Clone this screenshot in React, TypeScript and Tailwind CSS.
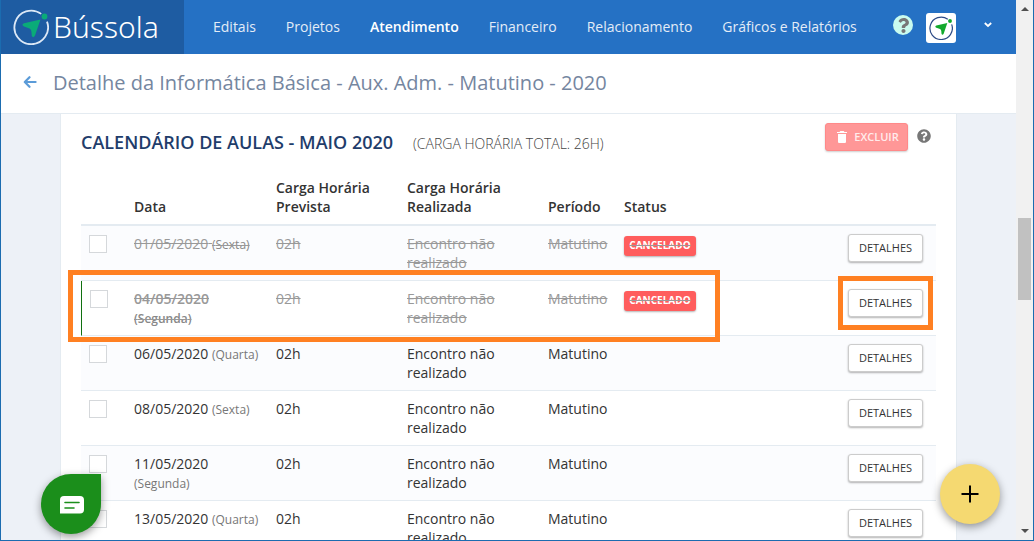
import React from 'react';
import { FaQuestion, FaQuestionCircle } from 'react-icons/fa';
import { IoMdTrash } from 'react-icons/io';

const NAV_ITEMS = [
    { label: 'Editais' },
    { label: 'Projetos' },
    { label: 'Atendimento', active: true },
    { label: 'Financeiro' },
    { label: 'Relacionamento' },
    { label: 'Gráficos e Relatórios' },
];

const LESSONS = [
    { date: '01/05/2020', day: 'Sexta', canceled: true },
    { date: '04/05/2020', day: 'Segunda', canceled: true, current: true },
    { date: '06/05/2020', day: 'Quarta' },
    { date: '08/05/2020', day: 'Sexta' },
    { date: '11/05/2020', day: 'Segunda' },
    { date: '13/05/2020', day: 'Quarta' },
];

const CompassMark = ({ className, ring, arrow }: { className: string; ring: string; arrow: string }) => (
    <svg viewBox="0 0 36 36" className={className} fill="none" aria-hidden="true">
        <path d="M28.2 4.9A16.8 16.8 0 1 0 34 12.6" stroke={ring} strokeWidth="1.8" />
        <circle cx="31.500" cy="7.500" r="2.9" fill={arrow} />
        <path d="M27.500 10.500 22 26.500Q20.300 29.500 18.800 27L18.400 22.500Q18.200 20.600 16.500 19.600L11 17.600Q8 15.700 11 14.200Z" fill={arrow} />
    </svg>
);

const Header = () => (
    <header className="flex h-[54px] shrink-0 bg-[#2571c4]">
        <a href="#" className="flex w-[183px] shrink-0 items-center gap-1 bg-[#1e5ca2] pl-3 text-white">
            <CompassMark className="size-9" ring="#dce8f6" arrow="#0aab78" />
            <span className="font-['Noto_Sans',sans-serif] text-[30px] leading-9 font-light">Bússola</span>
        </a>
        <nav className="flex flex-1 items-center gap-[30px] pl-[29px] text-sm text-[#e3ecf7]">
            {NAV_ITEMS.map((item) => (
                <a key={item.label} href="#" className={item.active ? 'font-semibold whitespace-nowrap text-white' : 'whitespace-nowrap'}>
                    {item.label}
                </a>
            ))}
        </nav>
        <div className="flex items-center pr-6">
            <button aria-label="Ajuda" className="mr-[13px] mb-1 flex size-5 items-center justify-center rounded-full bg-[#c9fbef] text-[#777]">
                <FaQuestion className="size-[15px]" />
            </button>
            <button aria-label="Perfil" className="mt-[2px] flex size-[30px] items-center justify-center rounded-[3px] bg-white">
                <CompassMark className="size-6" ring="#2c4a86" arrow="#12a92c" />
            </button>
            <button aria-label="Abrir menu" className="mb-1 ml-7 text-white">
                <svg viewBox="0 0 8 6" className="h-[6px] w-2" fill="none" stroke="currentColor" strokeWidth="1.8">
                    <path d="M.8 1 4 4 7.2 1" />
                </svg>
            </button>
        </div>
    </header>
);

const TitleBar = () => (
    <div className="flex h-[60px] shrink-0 items-center border-b border-[#e4ebf1] bg-white pl-[22px]">
        <a href="#" aria-label="Voltar" className="mr-4 mb-1 text-[#5b9bd8]">
            <svg viewBox="0 0 14 12" className="h-3 w-[14px]" fill="none" stroke="currentColor" strokeWidth="2.2" strokeLinecap="round" strokeLinejoin="round">
                <path d="M6.5 1.2 1.8 6l4.7 4.8M2.2 6h10.4" />
            </svg>
        </a>
        <h1 className="pb-[2px] text-xl text-[#75869f]">
            Detalhe da Informática Básica - Aux. Adm. - Matutino - 2020
        </h1>
    </div>
);

type Lesson = { date: string; day: string; canceled?: boolean; current?: boolean };

const LessonRow = ({ lesson }: { lesson: Lesson }) => {
    const text = lesson.canceled ? 'text-[#999] line-through' : 'text-[#333]';

    return (
        <tr className="relative align-top odd:bg-[#fbfcfe] [&>td]:border-b [&>td]:border-b-[#e4ebf1] [&>td]:p-2">
            <td className={lesson.current ? 'border-l border-l-[#107010]' : ''}>
                <input
                    type="checkbox"
                    aria-label={`Selecionar aula de ${lesson.date}`}
                    className="mt-px block size-[18px] appearance-none border border-[#d5d8db] bg-white"
                />
                {/* Marks the lesson being explained */}
                {lesson.current && (
                    <div className="pointer-events-none absolute -top-[11px] right-[216px] -bottom-[6px] -left-[13px] z-10 border-[5px] border-[#ff8022]" />
                )}
            </td>
            <td className={text}>
                <span className={lesson.current ? 'font-semibold' : ''}>
                    {lesson.date} <small className={lesson.canceled ? 'text-xs text-[#888]' : 'text-xs text-[#777]'}>({lesson.day})</small>
                </span>
            </td>
            <td className={text}>02h</td>
            <td className={text}>Encontro não realizado</td>
            <td className={text}>Matutino</td>
            <td>
                {lesson.canceled && (
                    <span className="mt-[2px] block h-5 w-[72px] rounded-[3px] bg-[#ff5d5d] text-center text-[10px] leading-[19px] font-bold text-white shadow-[0_1px_2px_rgba(0,0,0,0.3)]">
                        <s className="decoration-[#999]">CANCELADO</s>
                    </span>
                )}
            </td>
            <td>
                <div className="relative h-7 w-[75px]">
                    <button className="block h-7 w-full rounded-[3px] border border-[#ccc] bg-white pb-px text-[11px] text-[#333] shadow-[0_1px_2px_rgba(0,0,0,0.3)]">
                        DETALHES
                    </button>
                    {lesson.current && (
                        <div className="pointer-events-none absolute -top-[13px] -right-[10px] -bottom-[13px] -left-[10px] z-10 border-[5px] border-[#ff8022]" />
                    )}
                </div>
            </td>
        </tr>
    );
};

const Calendar = () => (
    <section className="mx-[59px] border-x border-[#e4ebf1] bg-white px-5">
        <div className="flex h-14 items-start pt-[9px]">
            <h2 className="pt-[5px] text-lg leading-7 font-semibold whitespace-nowrap text-[#1f3d6b]">CALENDÁRIO DE AULAS - MAIO 2020</h2>
            <span className="ml-5 pt-[11px] text-sm leading-5 font-light whitespace-nowrap text-[#444]">(CARGA HORÁRIA TOTAL: 26H)</span>
            <button className="ml-auto flex h-7 w-[83px] items-center justify-center gap-1 rounded-[3px] border border-[#ff8989] bg-[#ff9797] text-[11px] font-semibold text-[#ffecec] shadow-[0_1px_2px_rgba(0,0,0,0.2)]">
                <IoMdTrash className="size-4 text-white" />
                EXCLUIR
            </button>
            <button aria-label="Ajuda sobre a exclusão" className="mt-[6px] mr-[5px] ml-[9px] text-[#777]">
                <FaQuestionCircle className="size-[14px]" />
            </button>
        </div>

        <table className="w-full table-fixed border-separate border-spacing-0 text-sm leading-[19px]">
            <thead>
                <tr className="text-left align-bottom text-[#333] [&>th]:border-b-2 [&>th]:border-[#e4ebf1] [&>th]:p-2 [&>th]:font-semibold">
                    <th className="w-[45px]" />
                    <th className="w-[142px]">Data</th>
                    <th className="w-[131px]">Carga Horária Prevista</th>
                    <th className="w-[141px]">Carga Horária Realizada</th>
                    <th className="w-[76px]">Período</th>
                    <th>Status</th>
                    <th className="w-24" />
                </tr>
            </thead>
            <tbody>
                {LESSONS.map((lesson) => (
                    <LessonRow key={lesson.date} lesson={lesson} />
                ))}
            </tbody>
        </table>
    </section>
);

const ScrollBar = () => (
    <div className="flex w-[17px] shrink-0 flex-col items-center bg-[#f1f1f1]" aria-hidden="true">
        <svg viewBox="0 0 8 4" className="mt-[7px] h-1 w-2 fill-[#505050]">
            <path d="M4 0 8 4H0z" />
        </svg>
        <div className="flex w-full flex-1 flex-col items-center">
            <div className="basis-[40%]" />
            <div className="h-[82px] w-[13px] bg-[#c1c1c1]" />
        </div>
        <svg viewBox="0 0 8 4" className="mb-[7px] h-1 w-2 fill-[#505050]">
            <path d="M0 0h8L4 4z" />
        </svg>
    </div>
);

export default function App() {
    return (
        <div className="flex h-screen overflow-hidden border-x border-b border-[#1b6cb0] font-['Open_Sans',sans-serif]">
            <div className="relative flex min-w-0 flex-1 flex-col overflow-hidden bg-[#edf1f7]">
                <Header />
                <TitleBar />
                <main className="min-h-0 flex-1 overflow-hidden">
                    <Calendar />
                </main>

                <button aria-label="Abrir chat" className="absolute bottom-[6px] left-10 z-20 flex size-[60px] items-center justify-center rounded-full rounded-tr-lg bg-[#1b8e1b] pt-[2px] pl-[2px] shadow-[0_3px_8px_rgba(0,0,0,0.4)]">
                    <svg viewBox="0 0 24 18" className="h-[18px] w-6" fill="none">
                        <path d="M4 0h16a4 4 0 0 1 4 4v9.500a4 4 0 0 1-4 4H0V4a4 4 0 0 1 4-4z" fill="#fff" />
                        <path d="M5 6.500h14M5 12h9" stroke="#1b8e1b" strokeWidth="1.600" strokeLinecap="round" />
                    </svg>
                </button>
                <button aria-label="Adicionar" className="absolute right-4 bottom-4 z-20 flex size-[60px] items-center justify-center rounded-full bg-[#f5d971] shadow-[0_3px_8px_rgba(0,0,0,0.4)]">
                    <svg viewBox="0 0 18 18" className="size-[18px]" stroke="#000" strokeWidth="2">
                        <path d="M9 .5v17M.5 9h17" />
                    </svg>
                </button>
            </div>
            <ScrollBar />
        </div>
    );
}
